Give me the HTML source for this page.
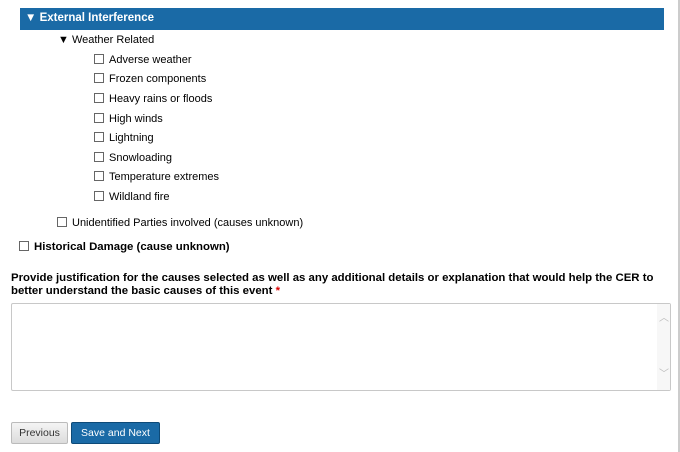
<!DOCTYPE html>
<html><head><style>
body{margin:0;width:680px;height:452px;background:#fff;font-family:"Liberation Sans",sans-serif;font-size:11px;color:#000;position:relative;overflow:hidden}
.a{position:absolute;white-space:nowrap;line-height:13px}
.b{font-weight:bold;font-size:11.4px}
.cb{position:absolute;width:8px;height:8px;border:1px solid #666;background:#fff}
.hdr{position:absolute;left:20px;top:8px;width:644px;height:22px;background:#1a6aa6;color:#fff;font-weight:bold;font-size:11.5px;line-height:21px;text-indent:5px}
</style></head><body>
<div style="position:absolute;left:678px;top:0;width:2px;height:452px;background:#ccc"></div>
<div class="hdr">▼ External Interference</div>
<div class="a" style="left:58px;top:34px">▼ Weather Related</div>
<div class="cb" style="left:94px;top:54px"></div><div class="a" style="left:109px;top:54px">Adverse weather</div>
<div class="cb" style="left:94px;top:73px"></div><div class="a" style="left:109px;top:73px">Frozen components</div>
<div class="cb" style="left:94px;top:93px"></div><div class="a" style="left:109px;top:93px">Heavy rains or floods</div>
<div class="cb" style="left:94px;top:113px"></div><div class="a" style="left:109px;top:113px">High winds</div>
<div class="cb" style="left:94px;top:132px"></div><div class="a" style="left:109px;top:132px">Lightning</div>
<div class="cb" style="left:94px;top:152px"></div><div class="a" style="left:109px;top:152px">Snowloading</div>
<div class="cb" style="left:94px;top:171px"></div><div class="a" style="left:109px;top:171px">Temperature extremes</div>
<div class="cb" style="left:94px;top:191px"></div><div class="a" style="left:109px;top:191px">Wildland fire</div>
<div class="cb" style="left:57px;top:217px"></div><div class="a" style="left:72px;top:217px">Unidentified Parties involved (causes unknown)</div>
<div class="cb" style="left:19px;top:241px"></div><div class="a b" style="left:34px;top:241px">Historical Damage (cause unknown)</div>
<div class="a b" style="left:11px;top:272px">Provide justification for the causes selected as well as any additional details or explanation that would help the CER to</div>
<div class="a b" style="left:11px;top:285px">better understand the basic causes of this event <span style="color:#d00">*</span></div>
<div style="position:absolute;left:11px;top:303px;width:658px;height:86px;border:1px solid #c8c8c8;border-radius:2px"></div>
<div style="position:absolute;left:657px;top:304px;width:13px;height:86px;background:#f7f7f7"></div>
<div class="a" style="left:659px;top:312px;color:#bbb;font-size:10px">︿</div>
<div class="a" style="left:659px;top:368px;color:#bbb;font-size:10px">﹀</div>
<div style="position:absolute;left:11px;top:422px;width:55px;height:20px;border:1px solid #bbb;border-radius:2px;background:linear-gradient(#f4f4f4,#dcdcdc);color:#333;line-height:20px;text-align:center;font-size:10.5px">Previous</div>
<div style="position:absolute;left:71px;top:422px;width:87px;height:20px;border:1px solid #0d4a78;border-radius:2px;background:#1a6aa6;color:#fff;line-height:20px;text-align:center;font-size:10.5px">Save and Next</div>
</body></html>
